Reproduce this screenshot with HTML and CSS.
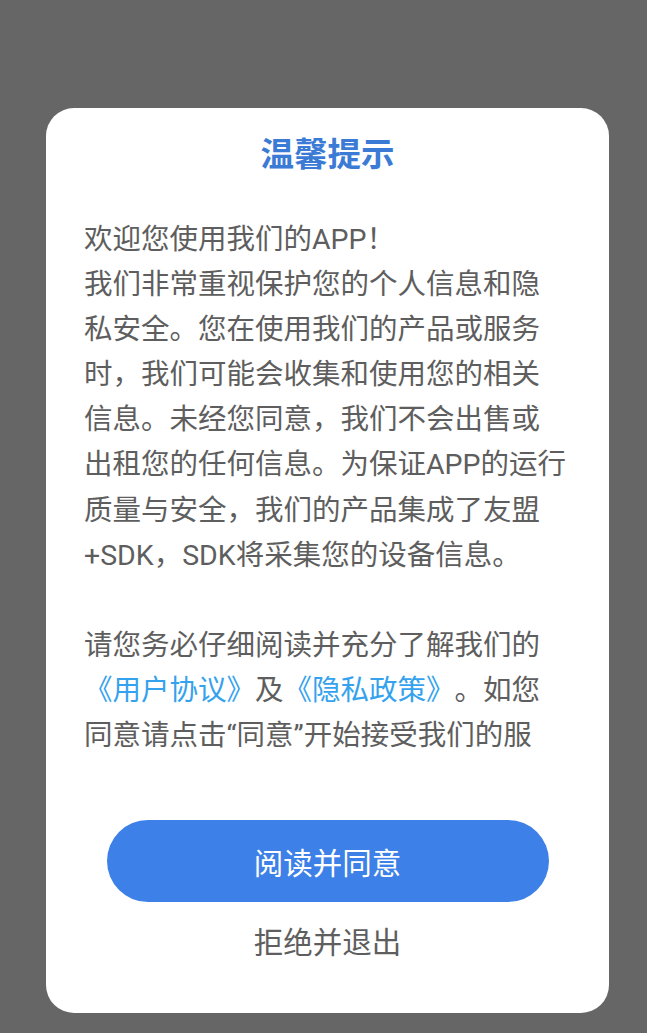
FILE: index.html
```html
<!DOCTYPE html>
<html lang="zh-CN">
<head>
  <meta charset="UTF-8">
  <title>温馨提示</title>
  <link rel="stylesheet" href="styles.css">
</head>
<body>

<div class="mask">
  <div class="dialog">
    <h2 class="dialog-title">温馨提示</h2>

    <div class="dialog-body">
      <p>欢迎您使用我们的APP！</p>
      <p class="gap">我们非常重视保护您的个人信息和隐私安全。您在使用我们的产品或服务时，我们可能会收集和使用您的相关信息。未经您同意，我们不会出售或出租您的任何信息。为保证APP的运行质量与安全，我们的产品集成了友盟+SDK，SDK将采集您的设备信息。</p>
      <p>请您务必仔细阅读并充分了解我们的<a href="#" class="link">《用户协议》</a>及<a href="#" class="link">《隐私政策》</a>。如您同意请点击“同意”开始接受我们的服务。</p>
    </div>

    <div class="dialog-actions">
      <button class="btn-agree">阅读并同意</button>
      <button class="btn-refuse">拒绝并退出</button>
    </div>
  </div>
</div>

</body>
</html>
```

FILE: styles.css
```css
* {
  box-sizing: border-box;
}

body {
  margin: 0;
  background: #666666;
  font-family: Roboto, "Noto Sans CJK SC", sans-serif;
}

.mask {
  height: 1033px;
  padding: 108px 38px 0 46px;
}

.dialog {
  width: 563px;
  height: 905px;
  background: #fff;
  border-radius: 28px;
  padding: 23px 0 0;
  display: flex;
  flex-direction: column;
}

.dialog-title {
  margin: 0;
  text-align: center;
  font-size: 33.5px;
  line-height: 48px;
  font-weight: bold;
  color: #3b7bd6;
}

.dialog-body {
  margin: 38px 0 0 38px;
  width: 483px;
  height: 548px;
  overflow: hidden;
  font-size: 28.5px;
  line-height: 45.1px;
  color: #5e5e5e;
  text-spacing-trim: space-all;
}

.dialog-body p {
  margin: 0;
}

.dialog-body p.gap {
  margin-bottom: 45.1px;
}

.link {
  color: #35a2ee;
  text-decoration: none;
}

.dialog-actions {
  display: flex;
  flex-direction: column;
  align-items: center;
  margin-top: 55px;
}

.btn-agree {
  width: 442px;
  height: 82px;
  border: none;
  border-radius: 41px;
  background: #3c80e8;
  color: #fff;
  font-family: inherit;
  font-size: 29.5px;
  cursor: pointer;
}

.btn-refuse {
  margin-top: 19px;
  border: none;
  background: none;
  padding: 0;
  color: #5e5e5e;
  font-family: inherit;
  font-size: 29.5px;
  line-height: 44px;
  cursor: pointer;
}
```
